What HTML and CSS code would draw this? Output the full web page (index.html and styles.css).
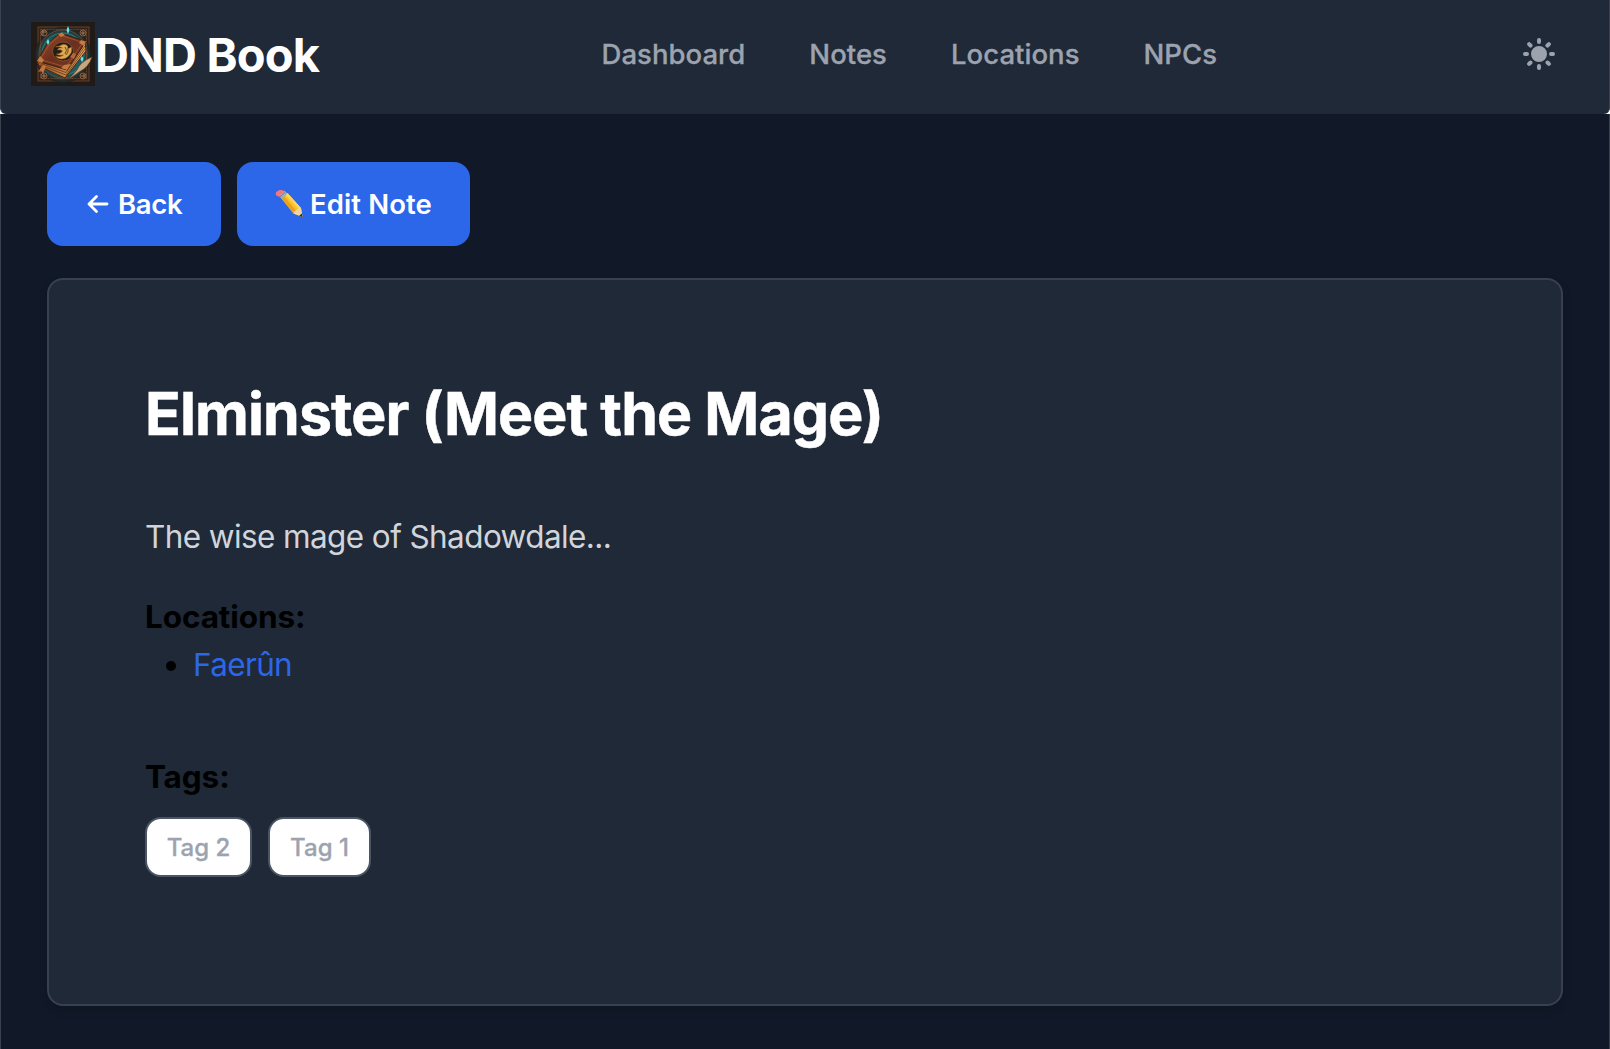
FILE: index.html
```html
<!DOCTYPE html>
<html lang="en">
<head>
<meta charset="utf-8">
<title>DND Book</title>
<link rel="stylesheet" href="styles.css">
</head>
<body>
<div class="app">
  <div class="topbar">
    <header class="nav">
      <a class="brand">
        <svg class="logo" viewBox="0 0 64 64" aria-hidden="true">
          <defs>
            <radialGradient id="glow"><stop offset="0" stop-color="#25888d"/><stop offset=".7" stop-color="#1b5a60"/><stop offset="1" stop-color="#241d19"/></radialGradient>
            <linearGradient id="cover" x1="0" y1="0" x2="1" y2="1"><stop offset="0" stop-color="#a0502c"/><stop offset=".5" stop-color="#6b2f1d"/><stop offset="1" stop-color="#7d3a20"/></linearGradient>
            <linearGradient id="pages" x1="0" y1="0" x2="1" y2="0"><stop offset="0" stop-color="#9a5328"/><stop offset="1" stop-color="#e5a558"/></linearGradient>
          </defs>
          <rect width="64" height="64" fill="#211b18"/>
          <rect x="7" y="5" width="51" height="54" fill="#30231b" stroke="#6a3e28"/>
          <circle cx="32" cy="33" r="28" fill="url(#glow)"/>
          <g fill="none" stroke="#7d5136" stroke-width=".7">
            <rect x="9.500" y="7.500" width="46" height="49" stroke-dasharray="2 1"/>
            <circle cx="32" cy="32" r="24"/><circle cx="32" cy="32" r="21" stroke="#3a8b88"/>
          </g>
          <g fill="#33251d" stroke="#8c6445" stroke-width="1">
            <circle cx="13" cy="11" r="3"/><circle cx="52" cy="11" r="3"/><circle cx="13" cy="54" r="3"/><circle cx="52" cy="54" r="3"/>
          </g>
          <path d="M11 10h4m-3-2v5m38-2h4m-2-2v4M11 54h4m-2-2v4m37-2h4m-1-2v4" stroke="#b58c62" stroke-width=".8"/>
          <path d="M6 39 8 44 34 56 55 29 54 20 36 47z" fill="url(#pages)" stroke="#4a2214"/>
          <path d="M9 43 35 53 54 27M10 41.500 35 50.500 54 24" fill="none" stroke="#693618" stroke-width=".8"/>
          <path d="M29 11 55 19.500 36 48 6 39 16 22z" fill="url(#cover)" stroke="#3d1d15"/>
          <path d="M29 13 52 20.500 35 45 9 37.500 18 23z" fill="none" stroke="#b0663b" stroke-width=".6"/>
          <path d="M27 12 31 10.500 34 13 30 15zM50 18 55 19.500 53 24 48 21zM6 39 9 34 13 38 11 41zM33 43 40 42 36 48 30 46z" fill="#c57a40"/>
          <ellipse cx="32" cy="29.500" rx="10.500" ry="9.500" fill="#241d18" stroke="#8a5632" stroke-width=".8"/>
          <path d="M24.500 25q2-1 4-1 4-3 7-1 2 1 1 4l4-2q1 5-2 8-3 4-8 4-4 0-6-3 5 2 8-1-4 1-7-1 4 0 6-3-2-2-5-1 1-3 5-2-3-2-7-1z" fill="#dfa950" stroke="#9a5b22" stroke-width=".5"/>
          <path d="M34 25q3 3 0 7m3-5q1 3-2 6" fill="none" stroke="#4b2c18" stroke-width=".8"/>
          <path d="M42 31 45 32 43 37 39 35z" fill="#b7673b"/>
          <path d="M12 43 15 44 12 52 10 49 7 50z" fill="#c17442"/>
          <path d="M61 35Q49 40 46 48L38 57 48 50Q58 45 61 35z" fill="#c7a77d" stroke="#623b26" stroke-width=".6"/>
          <path d="M37 4 38.500 8 37 12 35.500 8zM17 17 18.500 20 17 23 15.500 20zM51 34 52.500 37 51 40 49.500 37z" fill="#67e4ed"/>
        </svg>
        <span class="brand-name">DND Book</span>
      </a>
      <nav class="links">
        <a>Dashboard</a><a>Notes</a><a>Locations</a><a>NPCs</a>
      </nav>
      <button class="theme" aria-label="Toggle theme">
        <svg class="sun" viewBox="0 0 20 20" aria-hidden="true"><path fill="currentColor" fill-rule="evenodd" d="M10 2a1 1 0 011 1v1a1 1 0 11-2 0V3a1 1 0 011-1zm4 8a4 4 0 11-8 0 4 4 0 018 0zm-.464 4.950l.707.707a1 1 0 001.414-1.414l-.707-.707a1 1 0 00-1.414 1.414zm2.120-10.607a1 1 0 010 1.414l-.706.707a1 1 0 11-1.414-1.414l.707-.707a1 1 0 011.414 0zM17 11a1 1 0 100-2h-1a1 1 0 100 2h1zm-7 4a1 1 0 011 1v1a1 1 0 11-2 0v-1a1 1 0 011-1zM5.050 6.464A1 1 0 106.465 5.050l-.708-.707a1 1 0 00-1.414 1.414l.707.707zm1.414 8.486l-.707.707a1 1 0 01-1.414-1.414l.707-.707a1 1 0 011.414 1.414zM4 11a1 1 0 100-2H3a1 1 0 000 2h1z"/></svg>
      </button>
    </header>
  </div>
  <main class="page">
    <div class="actions">
      <a class="btn back">
        <svg class="arrow" viewBox="0 0 22 20" aria-hidden="true"><path d="M20 10H2M9.500 2.500 2 10l7.500 7.500" fill="none" stroke="#fff" stroke-width="2.800" stroke-linecap="round" stroke-linejoin="round"/></svg>
        <span>Back</span>
      </a>
      <a class="btn edit">
        <svg class="pencil" viewBox="0 0 28 28" aria-hidden="true">
          <path d="M6.500 8.500 12.500 3 26 18 27.500 27 18.500 23.500z" fill="#fbc02d"/>
          <path d="M6.500 8.500 9 6.300 21 20.500 18.500 23.500z" fill="#e9a11e"/>
          <path d="M10.500 4.800 12.500 3 26 18 24 19.500z" fill="#ffd75a"/>
          <path d="M18.500 23.500Q19 20 21.500 20.500 22 18 26 18L27.500 27z" fill="#f0d5a0"/>
          <path d="M24.200 25.700 26.800 23.500 27.500 27.300z" fill="#303033"/>
          <path d="M3.500 5.500 9.200.500 12.500 3.500 6.800 9z" fill="#9eafb9"/>
          <path d="M4.800 7 10.500 2" stroke="#718590"/>
          <path d="M1.500 5.500Q-.500 3 2.500 1T8 .500L9.200 1.800 3.500 6.800z" fill="#ef777e"/>
        </svg>
        <span>Edit Note</span>
      </a>
    </div>
    <article class="card">
      <h1>Elminster (Meet the Mage)</h1>
      <p class="desc">The wise mage of Shadowdale...</p>
      <section class="locations">
        <strong class="label">Locations:</strong>
        <ul><li><a>Faerûn</a></li></ul>
      </section>
      <section>
        <strong class="label">Tags:</strong>
        <div class="tags"><span class="tag">Tag 2</span><span class="tag one">Tag 1</span></div>
      </section>
    </article>
  </main>
</div>
</body>
</html>
```
FILE: styles.css
```css
* { box-sizing: border-box; }
body { margin: 0; font-family: Inter, "Liberation Sans", sans-serif; background: #111827; }
.app { height: 1049px; background: #111827; overflow: hidden; }
.topbar { background: #fff; }
.nav {
  height: 114px; padding: 0 50px 6px 30px; background: #1f2937;
  border: solid #3b424f; border-width: 0 1px;
  border-radius: 0 0 6px 6px; display: grid; align-items: center;
  grid-template-columns: 570.500px 1fr 40px;
}
.brand { display: flex; align-items: center; }
.logo { width: 64px; height: 64px; }
.brand-name { color: #fff; font-size: 47px; font-weight: 700; line-height: 64px; letter-spacing: -.850px; white-space: nowrap; padding-top: 2px; }
.links { display: flex; gap: 64px; color: #9ca3af; font-size: 27.500px; font-weight: 500; line-height: 40px; letter-spacing: .04px; -webkit-text-stroke: .3px #9ca3af; }
.theme { display: block; padding: 0; border: 0; background: none; color: #9ca3af; width: 40px; height: 40px; }
.sun { display: block; width: 40px; height: 40px; }
.page { height: 935px; padding: 48px 46px 0; border: solid #3b424f; border-width: 0 1px; }
.actions { display: flex; gap: 16px; }
.btn {
  display: flex; align-items: center; height: 84px; border-radius: 16px;
  background: #2b67e8; color: #fff; font-size: 27.500px; font-weight: 600; white-space: nowrap;
}
.back { width: 174px; padding-left: 40px; gap: 9px; letter-spacing: -.3px; }
.edit { width: 233px; padding-left: 38px; gap: 7px; letter-spacing: .1px; }
.arrow { width: 22px; height: 20px; }
.pencil { width: 28px; height: 28px; }
.card {
  margin-top: 32px; height: 728px; border: 2px solid #374151; border-radius: 16px;
  background: #1f2937; padding: 96px; font-size: 31.500px; line-height: 48px;
  box-shadow: 0 4px 8px rgba(0, 0, 0, .15);
}
h1 { margin: 0 0 62px; font-size: 59px; line-height: 75px; font-weight: 700; color: #fff; letter-spacing: -.900px; white-space: nowrap; -webkit-text-stroke: .5px #fff; }
.desc { margin: 0 0 32px; color: #d1d5db; letter-spacing: -.6px; }
.label { display: block; font-weight: 700; letter-spacing: -.1px; }
ul { margin: 0 0 64px; padding-left: 48px; }
li::marker { color: #000; }
li a { color: #2b67e8; letter-spacing: -.65px; }
.tags { display: flex; gap: 16px; margin-top: 16px; }
.tag {
  height: 60px; width: 107px; border: 2px solid #4b5563; border-radius: 16px; background: #fff;
  color: #9ca3af; font-size: 24px; font-weight: 500; line-height: 57px; text-align: center; -webkit-text-stroke: .3px #9ca3af;
}
.one { width: 103px; }
```
